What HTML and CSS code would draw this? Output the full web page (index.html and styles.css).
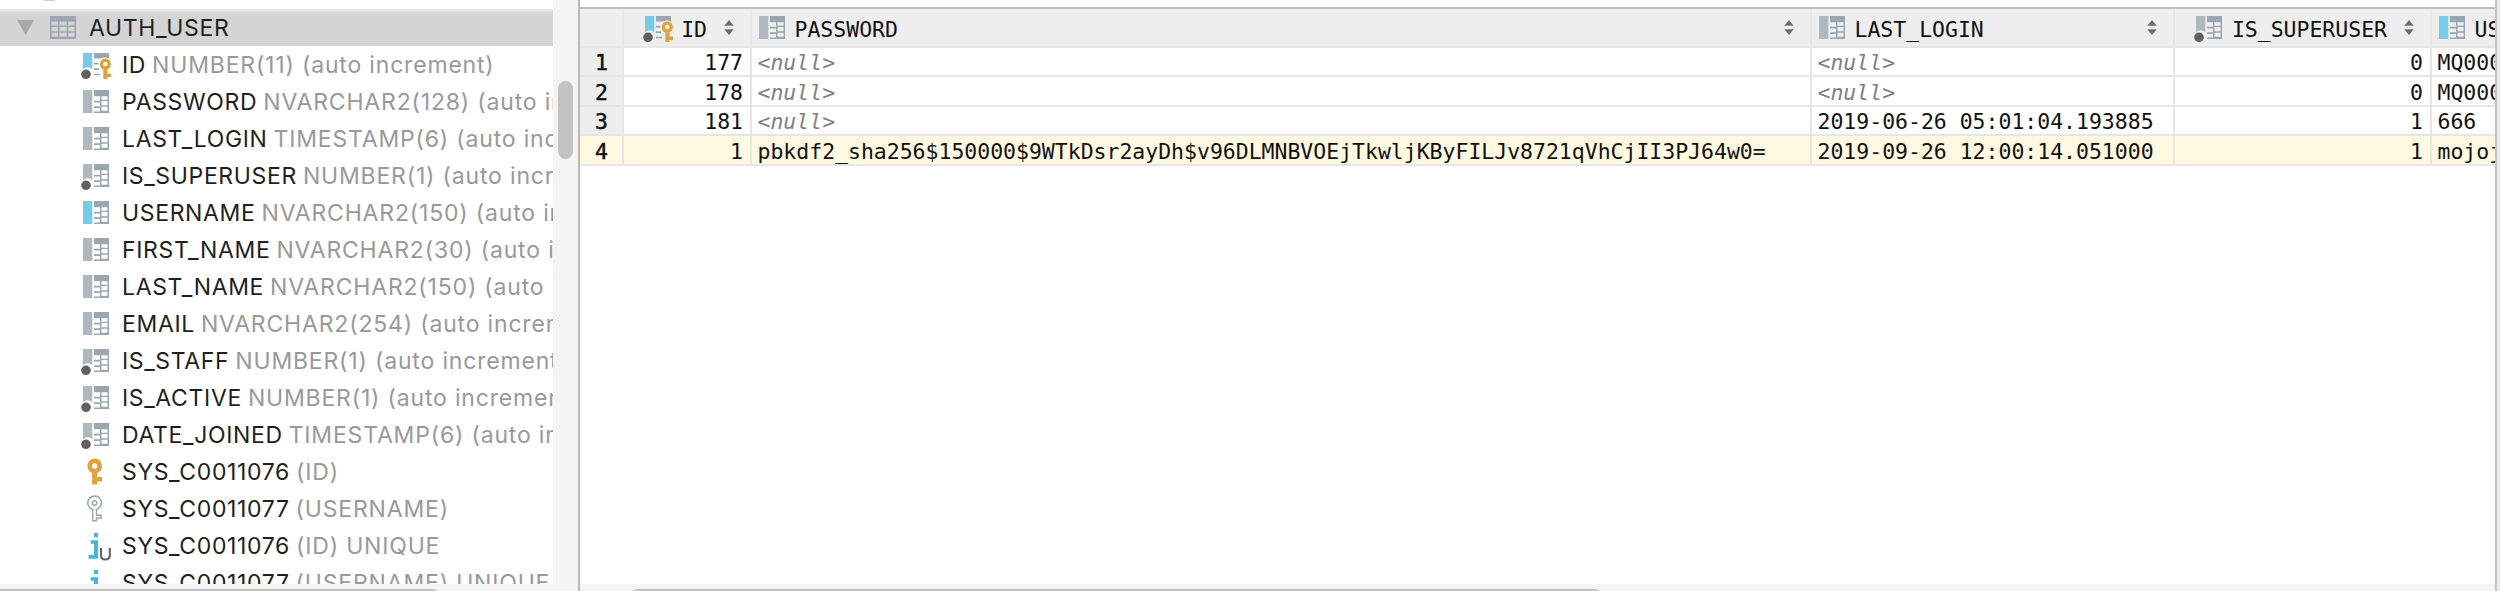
FILE: index.html
```
<!DOCTYPE html>
<html lang="en">
<head>
<meta charset="utf-8">
<title>AUTH_USER</title>
<link rel="stylesheet" href="styles.css">
</head>
<body>
<svg class="defs" aria-hidden="true">
  <defs>
    <g id="grid-part">
      <path fill="#9aa7b0" fill-rule="evenodd" d="M11 0H26V23H11V21.5H17V18H11V16.3H17V12.5H11V10.7H17V6.3H11ZM18.5 6.3V9.7H24.5V6.3ZM18.5 11V15.3H24.5V11ZM18.5 16.7V20.7H24.5V16.7Z"/>
    </g>
    <symbol id="col" viewBox="-2 0 30 27"><rect width="9.3" height="23" fill="#adb8bf"/><use href="#grid-part"/></symbol>
    <symbol id="col-blue" viewBox="-2 0 30 27"><rect width="9.3" height="23" fill="#76cbe9"/><use href="#grid-part"/></symbol>
    <symbol id="col-dot" viewBox="-2 0 30 27"><path fill="#adb8bf" d="M0 0H9.3V16.5A6 6 0 0 0 0 16.5Z"/><use href="#grid-part"/><circle cx="3" cy="21.3" r="4.8" fill="#636160"/></symbol>
    <symbol id="col-key" viewBox="-2 0 30 27"><path fill="#76cbe9" d="M0 0H9.3V16.5A6 6 0 0 0 0 16.5Z"/><path fill="#9aa7b0" d="M11 0H26V5.6Q22 3.5 18 5.6H11ZM11 9.8H15.5V11.5H11ZM11 15.3H16V17H11ZM11 20.7H17V22.3H11Z"/><circle cx="3" cy="21.3" r="4.8" fill="#636160"/><path fill="#dea33c" fill-rule="evenodd" d="M22.3 5.5A5.7 5.7 0 0 1 24.5 16.4V20.5H28V24H24.5V26H20.3V16.4A5.7 5.7 0 0 1 22.3 5.5ZM22.3 8.7A2.3 2.3 0 1 0 22.3 13.3A2.3 2.3 0 1 0 22.3 8.7Z"/></symbol>
    <symbol id="table" viewBox="-2 0 30 27"><path fill="#9aa7b0" fill-rule="evenodd" d="M0 0H26V23H0ZM1.7 5.6V9.5H8V5.6ZM9.5 5.6V9.5H16.7V5.6ZM18.3 5.6V9.5H24.4V5.6ZM1.7 11V15.2H8V11ZM9.5 11V15.2H16.7V11ZM18.3 11V15.2H24.4V11ZM1.7 16.7V20.8H8V16.7ZM9.5 16.7V20.8H16.7V16.7ZM18.3 16.7V20.8H24.4V16.7Z"/></symbol>
    <symbol id="key" viewBox="-2 0 30 27"><path fill="#dea33c" fill-rule="evenodd" d="M11.7 -1.5A7.5 7.5 0 0 1 14.1 13V17H19V21.5H14.1V24.5H9.2V13A7.5 7.5 0 0 1 11.7 -1.5ZM11.7 3.3A2.7 2.7 0 1 0 11.7 8.7A2.7 2.7 0 1 0 11.7 3.3Z"/></symbol>
    <symbol id="key-line" viewBox="-2 0 30 27"><g fill="none" stroke="#9aa7b0" stroke-width="1.5"><path d="M9.7 12.4A6.8 6.8 0 1 1 13.5 12.4V18.3H18.2V21H13.5V23.8H9.7Z"/><circle cx="11.6" cy="6" r="2.2"/></g></symbol>
    <symbol id="index" viewBox="-2 0 30 27"><path fill="#40b6e0" d="M11 -1H15V3.3H11ZM7.7 6.2H15V24.7H5.5V21H11V9.7H7.7Z"/><path fill="none" stroke="#636160" stroke-width="2.1" d="M18 14V21.5Q18 25.5 22.3 25.5T26.8 21.5V14"/></symbol>
    <symbol id="sort" viewBox="0 0 10 15"><path fill="#6e6e6e" d="M5 0L9.7 5.7H.3ZM5 15L.3 9.3H9.7Z"/></symbol>
  </defs>
</svg>
<div class="app">
  <aside class="sidebar">
    <div class="tree">
      <div class="previous"><i></i></div>
      <div class="item root"><svg class="arrow" viewBox="0 0 17 15"><path d="M0 0H17L8.5 15Z"/></svg><svg class="icon"><use href="#table"/></svg><span class="name">AUTH_USER</span></div>
      <div class="item"><svg class="icon"><use href="#col-key"/></svg><span class="name">ID</span><span class="type">NUMBER(11) (auto increment)</span></div>
      <div class="item"><svg class="icon"><use href="#col"/></svg><span class="name">PASSWORD</span><span class="type">NVARCHAR2(128) (auto increment)</span></div>
      <div class="item"><svg class="icon"><use href="#col"/></svg><span class="name">LAST_LOGIN</span><span class="type">TIMESTAMP(6) (auto increment)</span></div>
      <div class="item"><svg class="icon"><use href="#col-dot"/></svg><span class="name">IS_SUPERUSER</span><span class="type">NUMBER(1) (auto increment)</span></div>
      <div class="item"><svg class="icon"><use href="#col-blue"/></svg><span class="name">USERNAME</span><span class="type">NVARCHAR2(150) (auto increment)</span></div>
      <div class="item"><svg class="icon"><use href="#col"/></svg><span class="name">FIRST_NAME</span><span class="type">NVARCHAR2(30) (auto increment)</span></div>
      <div class="item"><svg class="icon"><use href="#col"/></svg><span class="name">LAST_NAME</span><span class="type">NVARCHAR2(150) (auto increment)</span></div>
      <div class="item"><svg class="icon"><use href="#col"/></svg><span class="name">EMAIL</span><span class="type">NVARCHAR2(254) (auto increment)</span></div>
      <div class="item"><svg class="icon"><use href="#col-dot"/></svg><span class="name">IS_STAFF</span><span class="type">NUMBER(1) (auto increment)</span></div>
      <div class="item"><svg class="icon"><use href="#col-dot"/></svg><span class="name">IS_ACTIVE</span><span class="type">NUMBER(1) (auto increment)</span></div>
      <div class="item"><svg class="icon"><use href="#col-dot"/></svg><span class="name">DATE_JOINED</span><span class="type">TIMESTAMP(6) (auto increment)</span></div>
      <div class="item"><svg class="icon"><use href="#key"/></svg><span class="name">SYS_C0011076</span><span class="type">(ID)</span></div>
      <div class="item"><svg class="icon"><use href="#key-line"/></svg><span class="name">SYS_C0011077</span><span class="type">(USERNAME)</span></div>
      <div class="item"><svg class="icon"><use href="#index"/></svg><span class="name">SYS_C0011076</span><span class="type">(ID) UNIQUE</span></div>
      <div class="item"><svg class="icon"><use href="#index"/></svg><span class="name">SYS_C0011077</span><span class="type">(USERNAME) UNIQUE</span></div>
    </div>
    <div class="vbar"><div class="vthumb"></div></div>
    <div class="hbar"><div class="hthumb"></div></div>
  </aside>
  <main class="data">
    <div class="table">
      <div class="row head">
        <div class="cell"></div>
        <div class="cell right"><svg class="icon"><use href="#col-key"/></svg><span>ID</span><svg class="sort"><use href="#sort"/></svg></div>
        <div class="cell"><svg class="icon"><use href="#col"/></svg><span>PASSWORD</span><svg class="sort"><use href="#sort"/></svg></div>
        <div class="cell"><svg class="icon"><use href="#col"/></svg><span>LAST_LOGIN</span><svg class="sort"><use href="#sort"/></svg></div>
        <div class="cell right"><svg class="icon"><use href="#col-dot"/></svg><span>IS_SUPERUSER</span><svg class="sort"><use href="#sort"/></svg></div>
        <div class="cell"><svg class="icon"><use href="#col-blue"/></svg><span>USERNAME</span></div>
      </div>
      <div class="row"><div class="cell num">1</div><div class="cell right">177</div><div class="cell null">&lt;null&gt;</div><div class="cell null">&lt;null&gt;</div><div class="cell right">0</div><div class="cell">MQ000</div></div>
      <div class="row tall"><div class="cell num">2</div><div class="cell right">178</div><div class="cell null">&lt;null&gt;</div><div class="cell null">&lt;null&gt;</div><div class="cell right">0</div><div class="cell">MQ000</div></div>
      <div class="row"><div class="cell num">3</div><div class="cell right">181</div><div class="cell null">&lt;null&gt;</div><div class="cell">2019-06-26 05:01:04.193885</div><div class="cell right">1</div><div class="cell">666</div></div>
      <div class="row tall current"><div class="cell num">4</div><div class="cell right">1</div><div class="cell">pbkdf2_sha256$150000$9WTkDsr2ayDh$v96DLMNBVOEjTkwljKByFILJv8721qVhCjII3PJ64w0=</div><div class="cell">2019-09-26 12:00:14.051000</div><div class="cell right">1</div><div class="cell">mojoj</div></div>
    </div>
    <div class="hbar"><div class="hthumb"></div></div>
  </main>
  <div class="edge"></div>
</div>
</body>
</html>
```
FILE: styles.css
```
* { box-sizing: border-box; }
body { margin: 0; background: #fff; }
.defs { position: absolute; width: 0; height: 0; }
.app { display: grid; grid-template-columns: 580px 1915px 5px; width: 2500px; height: 591px; overflow: hidden; }

/* Schema tree */
.sidebar {
  display: grid; grid-template: 584px 7px / 553px 25px; height: 591px;
  border-right: 2px solid #b9b9b9; background: #f4f4f4; overflow: hidden;
}
.tree { background: #fff; overflow: hidden; font: 23px/35px Inter, sans-serif; }
.previous { height: 9px; padding-left: 44px; }
.previous i { display: block; width: 11px; height: 1px; background: #cfcfcf; }
.item { display: flex; align-items: center; height: 37px; padding-left: 81px; white-space: nowrap; }
.item.root { padding-left: 17px; background: linear-gradient(#e9e9e9, #d4d4d4 5px); }
.arrow { width: 17px; height: 15px; margin-right: 14px; fill: #a9a9a9; flex: none; }
.icon { width: 30px; height: 27px; flex: none; overflow: visible; }
.item .icon { margin: 4px 11px 0 0; }
.item.root .icon { margin-right: 11px; }
symbol { overflow: visible; }
.name { color: #1f1f1f; margin-right: 6px; padding-top: 2px; letter-spacing: 0.65px; }
.type { color: #999; padding-top: 2px; letter-spacing: 0.82px; }
.vbar { display: flex; justify-content: center; padding-top: 81px; background: #f4f4f4; }
.vthumb { width: 15px; height: 78px; border-radius: 8px; background: #c2c2c2; }
.hbar { height: 7px; padding-top: 5px; background: #f4f4f4; overflow: hidden; }
.hthumb { height: 15px; border-radius: 8px; background: #c1c1c1; }
.sidebar .hbar { grid-column: 1 / 3; }
.sidebar .hthumb { width: 448px; margin-left: -8px; }

/* Result grid */
.data { display: grid; grid-template-rows: 584px 7px; overflow: hidden; }
.table { padding-top: 7px; font: 21.48px/25px "DejaVu Sans Mono", monospace; color: #111; overflow: hidden; }
.row { display: grid; grid-template-columns: 44px 128px 1060px 363px 257px 200px; height: 29px; }
.row.tall { height: 30px; }
.row.head { height: 41px; border-top: 2px solid #bfbfbf; background: #eee; }
.cell {
  display: flex; align-items: center; min-width: 0; padding: 2px 0 0 5.5px; white-space: pre;
  border-right: 2px solid #e6e6e6; border-bottom: 2px solid #e6e6e6;
}
.tall .cell { padding-top: 3px; }
.cell.right { justify-content: flex-end; padding-right: 7px; }
.cell.num { justify-content: center; padding-left: 1px; background: #eee; -webkit-text-stroke: 0.5px #111; }
.cell.null { color: #808080; font-style: italic; }
.current .cell { background: #fff9e2; }
.head .cell { padding-top: 0; }
.head .cell span { padding-top: 3px; }
.head .cell.right { padding-right: 16px; }
.head .cell .icon { margin: 3px 8px 0 -1px; }
.sort { width: 10px; height: 15px; margin: 0 16px 0 auto; flex: none; }
.head .cell.right .sort { margin: 0 0 0 17px; }
.data .hthumb { width: 972px; margin-left: 50px; }
.edge { background: #ebebeb; border-left: 2px solid #c3c3c3; }
```
